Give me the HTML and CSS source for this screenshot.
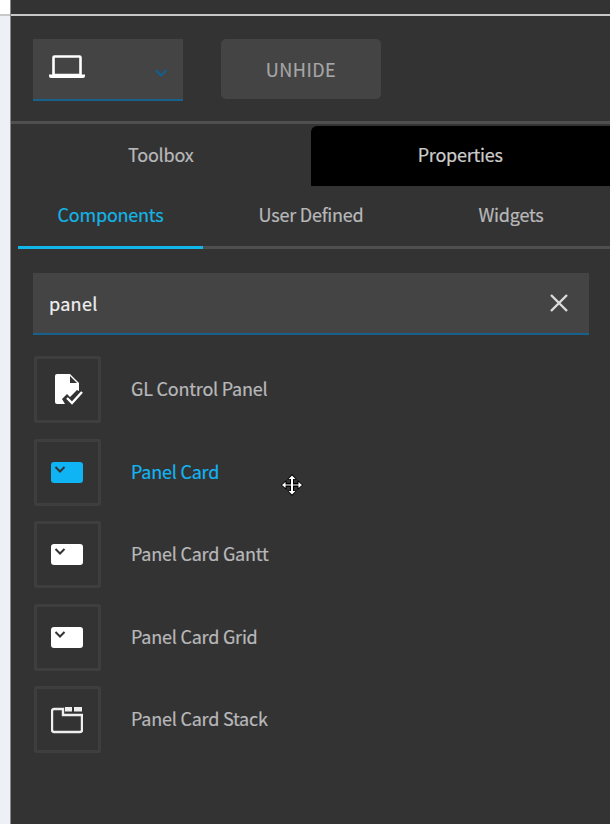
FILE: index.html
```html
<!DOCTYPE html>
<html lang="en">
<head>
<meta charset="utf-8">
<title>Toolbox</title>
<link rel="stylesheet" href="styles.css">
</head>
<body>
<div class="app">
  <div class="gutter"><div class="gutter-top"></div></div>
  <main class="panel">
    <div class="top-strip"></div>
    <section class="controls">
      <div class="select">
        <svg class="laptop" width="36" height="25" viewBox="0 0 36 25" fill="none"><path d="M4.500 2.500a1 1 0 0 1 1-1h25a1 1 0 0 1 1 1V20H4.500z" stroke="#fff" stroke-width="2.600"/><path d="M0 19.500h36v1.500a2 2 0 0 1-2 2H2a2 2 0 0 1-2-2z" fill="#fff"/></svg>
        <svg class="chev" width="14" height="8" viewBox="0 0 14 8" fill="none"><path d="M1.500 1l5.500 5.500L12.500 1" stroke="#11608f" stroke-width="2"/></svg>
      </div>
      <div class="unhide">UNHIDE</div>
    </section>
    <nav class="tabs">
      <div class="tab">Toolbox</div>
      <div class="tab tab-active">Properties</div>
    </nav>
    <nav class="subtabs">
      <div class="subtab subtab-active">Components</div>
      <div class="subtab subtab-mid">User Defined</div>
      <div class="subtab">Widgets</div>
    </nav>
    <div class="search">
      <span class="query">panel</span>
      <svg width="20" height="20" viewBox="0 0 20 20" fill="none"><path d="M2 2l16 16M18 2L2 18" stroke="#dcdcdc" stroke-width="2.400"/></svg>
    </div>
    <ul class="list">
      <li class="item">
        <div class="icon-box"><svg class="icon-doc" width="30" height="34" viewBox="0 0 30 34"><path d="M3 1h13l9 9v8l-2-1-7 7-3-3-5 5 3 5H3a2 2 0 0 1-2-2V3a2 2 0 0 1 2-2z" fill="#fff"/><path d="M16 3l7 7h-7z" fill="#333"/><path d="M13 25l5 5 10-11" fill="none" stroke="#fff" stroke-width="2.400"/></svg></div>
        <span>GL Control Panel</span>
      </li>
      <li class="item item-active">
        <div class="icon-box"><svg class="icon-card" width="32" height="21" viewBox="0 0 32 21"><rect width="32" height="21" rx="3" fill="#0fb4f5"/><path d="M4.500 5l4.500 4.500L13.500 5" fill="none" stroke="#333" stroke-width="2"/></svg></div>
        <span>Panel Card</span>
      </li>
      <li class="item">
        <div class="icon-box"><svg class="icon-card" width="32" height="21" viewBox="0 0 32 21"><rect width="32" height="21" rx="3" fill="#fff"/><path d="M4.500 5l4.500 4.500L13.500 5" fill="none" stroke="#333" stroke-width="2"/></svg></div>
        <span>Panel Card Gantt</span>
      </li>
      <li class="item">
        <div class="icon-box"><svg class="icon-card" width="32" height="21" viewBox="0 0 32 21"><rect width="32" height="21" rx="3" fill="#fff"/><path d="M4.500 5l4.500 4.500L13.500 5" fill="none" stroke="#333" stroke-width="2"/></svg></div>
        <span>Panel Card Grid</span>
      </li>
      <li class="item">
        <div class="icon-box"><svg class="icon-card" width="32" height="28" viewBox="0 0 32 28"><path d="M3 3h9v6h19v15a2 2 0 0 1-2 2H3a2 2 0 0 1-2-2V5a2 2 0 0 1 2-2z" fill="none" stroke="#eee" stroke-width="2.400"/><path d="M14 1h7v4.500h-7zM23 1h8v4.500h-8z" fill="#eee"/></svg></div>
        <span>Panel Card Stack</span>
      </li>
    </ul>
    <svg class="cursor" width="22" height="22" viewBox="0 0 22 22"><path d="M11 0l5 5.500h-3V9h3.500V6l5.500 5-5.500 5v-3H13v3.500h3L11 22l-5-5.500h3V13H5.500v3L0 11l5.500-5v3H9V5.500H6z" fill="#000"/><path d="M11 1.500l3.500 3.500H12v5.500h5.500V8L21 11l-3.500 3v-2.500H12V17h2.500L11 20.500 7.500 17H10v-5.500H4.500V14L1 11l3.500-3v2.500H10V5H7.500z" fill="#fff"/></svg>
  </main>
</div>
</body>
</html>
```
FILE: styles.css
```css
* { box-sizing: border-box; }
html, body { margin: 0; height: 100%; }
body { background: #333; font-family: "Noto Sans CJK JP", "Noto Sans", sans-serif; font-size: 18px; letter-spacing: -0.22px; -webkit-text-stroke: 0.2px; color: #b8b8ba; overflow: hidden; }
.app { display: flex; width: 610px; height: 824px; }
.gutter { width: 11px; flex: none; background: #edf1f5; border-right: 1px solid #8a8a8a; }
.gutter-top { height: 16px; background: #fff; border-bottom: 2px solid #c8c8c8; }
.panel { position: relative; flex: 1; min-width: 0; background: #333; }
.top-strip { height: 16px; border-bottom: 2px solid #c8c8c8; }
.controls { display: flex; gap: 38px; height: 108px; padding: 23px 22px 0; border-bottom: 3px solid #4f4f4f; }
.select { width: 150px; height: 62px; background: #444; border-bottom: 2px solid #16628c; display: flex; align-items: center; justify-content: space-between; padding: 0 15px 0 16px; }
.laptop { margin-bottom: 4px; }
.chev { margin-top: 7px; }
.unhide { width: 160px; height: 60px; background: #444; border-radius: 5px; display: flex; align-items: center; justify-content: center; color: #a6a6a6; letter-spacing: .5px; }
.tabs { display: flex; height: 62px; padding-top: 2px; }
.tab { flex: 1; display: flex; align-items: center; justify-content: center; padding-bottom: 4px; }
.tab-active { background: #000; color: #ccc; border-radius: 6px 0 0 0; }
.subtabs { display: flex; height: 63px; margin-left: 7px; border-bottom: 3px solid #4f4f4f; }
.subtab { flex: none; width: 184px; display: flex; align-items: center; justify-content: center; padding-bottom: 4px; margin-bottom: -3px; border-bottom: 3px solid transparent; }
.subtab-active { width: 185px; color: #14b4e6; border-bottom-color: #12b7ea; }
.subtab-mid { width: 216px; }
.search { margin: 24px 21px 0 22px; height: 62px; background: #444; border-bottom: 2px solid #16628c; display: flex; align-items: center; justify-content: space-between; padding: 0 20px 0 16px; color: #f0f0f0; }
.query { letter-spacing: .3px; }
.list { list-style: none; margin: 21px 0 0 23px; padding: 0; display: flex; flex-direction: column; gap: 15.500px; }
.item { display: flex; align-items: center; gap: 30px; height: 67px; }
.item span { padding-bottom: 3px; }
.item-active { color: #12b4f0; }
.icon-box { width: 67px; height: 67px; border: 3px solid #3e3e3e; border-radius: 2px; display: flex; align-items: center; justify-content: center; flex: none; }
.icon-doc { margin-left: 3px; }
.icon-card { margin-right: 1px; }
.cursor { position: absolute; left: 270px; top: 474px; }
```
